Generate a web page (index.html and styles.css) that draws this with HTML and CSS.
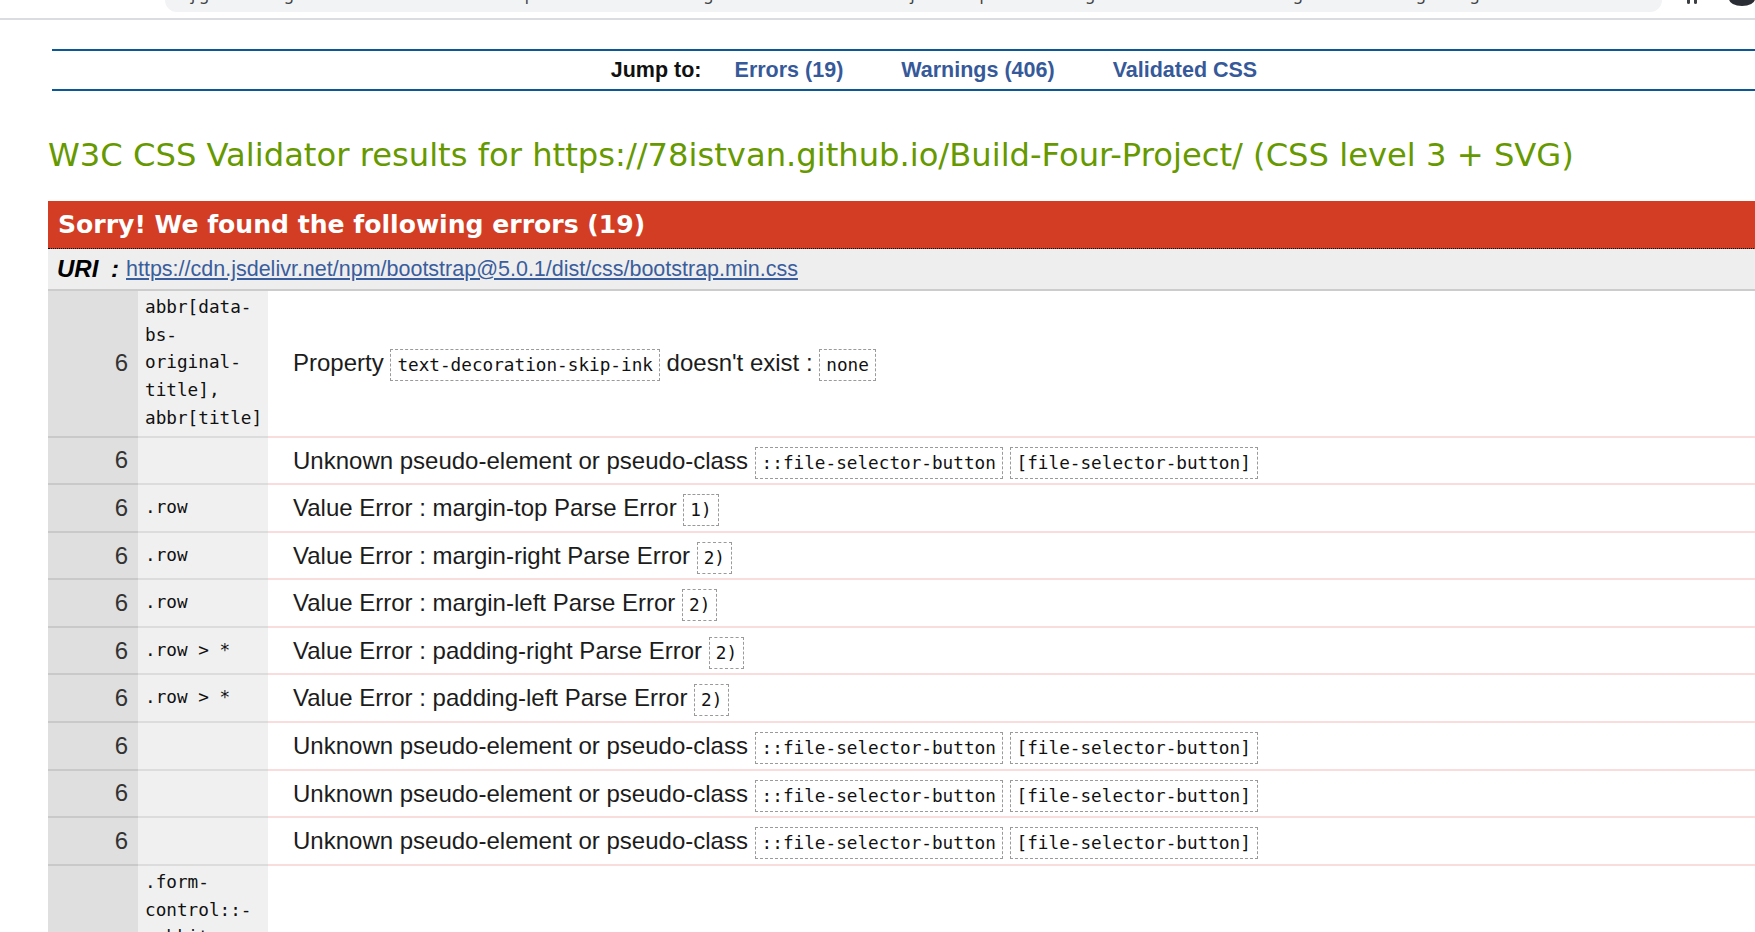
FILE: index.html
```html
<!DOCTYPE html>
<html lang="en">
<head>
<meta charset="utf-8">
<title>W3C CSS Validator results</title>
<link rel="stylesheet" href="styles.css">
</head>
<body>
<div class="chrome">
  <div class="omnibox">
    <div class="omnibox-text">jigsaw.w3.org/css-validator/validator?uri=https%3A%2F%2F78istvan.github.io%2FBuild-Four-Project%2F&amp;profile=css3svg&amp;usermedium=all&amp;warning=1&amp;vextwarning=&amp;lang=en</div>
  </div>
  <div class="chrome-icons">
    <span class="ext"></span><span class="ext"></span>
    <span class="avatar"></span>
  </div>
</div>

<div class="page">
  <nav class="jump">
    <span class="jump-label">Jump to:</span>
    <a href="#errors">Errors (19)</a>
    <a href="#warnings">Warnings (406)</a>
    <a href="#css">Validated CSS</a>
  </nav>

  <h2 class="title">W3C CSS Validator results for <span class="title-uri">https://78istvan.github.io/Build-Four-Project/</span> (CSS level 3 + SVG)</h2>

  <div class="errors" id="errors">
    <h3 class="errors-head">Sorry! We found the following errors (19)</h3>
    <div class="uri"><span class="uri-label">URI :</span><a class="uri-link" href="#">https://cdn.jsdelivr.net/npm/bootstrap@5.0.1/dist/css/bootstrap.min.css</a></div>
    <table class="err-table">
      <colgroup><col class="c-ln"><col class="c-sel"><col class="c-msg"></colgroup>
      <tbody>
        <tr>
          <td class="ln">6</td>
          <td class="sel">abbr[data-bs-original-title], abbr[title]</td>
          <td class="msg">Property <span class="code">text-decoration-skip-ink</span> doesn't exist : <span class="code">none</span></td>
        </tr>
        <tr>
          <td class="ln">6</td>
          <td class="sel"></td>
          <td class="msg">Unknown pseudo-element or pseudo-class <span class="code">::file-selector-button</span> <span class="code">[file-selector-button]</span></td>
        </tr>
        <tr>
          <td class="ln">6</td>
          <td class="sel">.row</td>
          <td class="msg">Value Error : margin-top Parse Error <span class="code">1)</span></td>
        </tr>
        <tr>
          <td class="ln">6</td>
          <td class="sel">.row</td>
          <td class="msg">Value Error : margin-right Parse Error <span class="code">2)</span></td>
        </tr>
        <tr>
          <td class="ln">6</td>
          <td class="sel">.row</td>
          <td class="msg">Value Error : margin-left Parse Error <span class="code">2)</span></td>
        </tr>
        <tr>
          <td class="ln">6</td>
          <td class="sel">.row &gt; *</td>
          <td class="msg">Value Error : padding-right Parse Error <span class="code">2)</span></td>
        </tr>
        <tr>
          <td class="ln">6</td>
          <td class="sel">.row &gt; *</td>
          <td class="msg">Value Error : padding-left Parse Error <span class="code">2)</span></td>
        </tr>
        <tr>
          <td class="ln">6</td>
          <td class="sel"></td>
          <td class="msg">Unknown pseudo-element or pseudo-class <span class="code">::file-selector-button</span> <span class="code">[file-selector-button]</span></td>
        </tr>
        <tr>
          <td class="ln">6</td>
          <td class="sel"></td>
          <td class="msg">Unknown pseudo-element or pseudo-class <span class="code">::file-selector-button</span> <span class="code">[file-selector-button]</span></td>
        </tr>
        <tr>
          <td class="ln">6</td>
          <td class="sel"></td>
          <td class="msg">Unknown pseudo-element or pseudo-class <span class="code">::file-selector-button</span> <span class="code">[file-selector-button]</span></td>
        </tr>
        <tr>
          <td class="ln">6</td>
          <td class="sel">.form-control::-webkit-file-upload-button</td>
          <td class="msg">Unknown pseudo-element or pseudo-class <span class="code">::-webkit-file-upload-button</span></td>
        </tr>
      </tbody>
    </table>
  </div>
</div>
</body>
</html>
```

FILE: styles.css
```css
html, body {
  margin: 0;
  padding: 0;
}

body {
  width: 1755px;
  height: 932px;
  overflow: hidden;
  background: #ffffff;
  font-family: "Liberation Sans", Arial, sans-serif;
  color: #000;
}

/* browser chrome remnant */
.chrome {
  display: flex;
  align-items: flex-start;
  height: 18px;
  border-bottom: 2px solid #dadce0;
  overflow: hidden;
}

.omnibox {
  margin-left: 165px;
  width: 1510px;
  height: 12px;
  background: #f1f3f4;
  border-radius: 0 0 18px 18px;
  overflow: hidden;
}

.omnibox-text {
  margin-top: -15px;
  padding-left: 26px;
  font-family: "Noto Sans", sans-serif;
  font-size: 16px;
  line-height: 18px;
  color: #3c4043;
  white-space: nowrap;
}

.chrome-icons {
  display: flex;
  align-items: flex-start;
  gap: 4px;
  margin-left: 25px;
}

.ext {
  width: 3px;
  height: 4px;
  background: #3c4043;
  border-radius: 0 0 2px 2px;
}

.avatar {
  margin-left: 28px;
  width: 26px;
  height: 14px;
  margin-top: -8px;
  border-radius: 50%;
  background: #2a2d33;
}

/* page */
.page {
  width: 1820px;
  padding-left: 48px;
}

.jump {
  margin-top: 29px;
  margin-left: 4px;
  width: 1764px;
  height: 38px;
  border-top: 2px solid #0b5896;
  border-bottom: 2px solid #0b5896;
  display: flex;
  justify-content: center;
  align-items: center;
  font-size: 21.5px;
  font-weight: bold;
}

.jump-label {
  color: #111;
  margin-right: 33px;
}

.jump a {
  color: #36599a;
  text-decoration: none;
}

.jump a + a {
  margin-left: 58px;
}

.title {
  margin: 44px 0 26px 0;
  font-family: "DejaVu Sans", Verdana, sans-serif;
  font-weight: normal;
  font-size: 32.2px;
  line-height: 40px;
  color: #669900;
  white-space: nowrap;
}

.errors-head {
  margin: 0;
  height: 47px;
  box-sizing: content-box;
  background: #d33d24;
  border-bottom: 1px dotted #000;
  color: #ffffff;
  font-family: "DejaVu Sans", Verdana, sans-serif;
  font-weight: bold;
  font-size: 25.1px;
  display: flex;
  align-items: center;
  padding-left: 10px;
}

.uri {
  height: 40px;
  background: #eeeeee;
  border-bottom: 2px solid #cccccc;
  display: flex;
  align-items: center;
  padding-left: 9px;
  font-size: 21.5px;
}

.uri-label {
  font-weight: bold;
  font-style: italic;
  font-size: 24px;
  word-spacing: 6px;
  margin-right: 7px;
}

.uri-link {
  color: #3a5d9c;
  text-decoration: underline;
}

.err-table {
  width: 1772px;
  table-layout: fixed;
  border-collapse: collapse;
}

.c-ln { width: 90px; }
.c-sel { width: 130px; }

.err-table td {
  vertical-align: middle;
  padding-top: 3px;
  padding-bottom: 3px;
}

.ln {
  background: #dfdfdf;
  text-align: right;
  padding-right: 10px;
  font-size: 24px;
  color: #333;
  border-bottom: 2px solid #c9c9c9;
}

.sel {
  background: #f0f0f0;
  padding-left: 7px;
  padding-right: 4px;
  font-family: "DejaVu Sans Mono", monospace;
  font-size: 17.7px;
  line-height: 27.7px;
  color: #111;
  border-bottom: 2px solid #dcdcdc;
}

.msg {
  padding-left: 25px;
  font-size: 24px;
  line-height: 39.6px;
  color: #1c1c1c;
  border-bottom: 2px solid #fadcdc;
  white-space: nowrap;
}

.code {
  display: inline-block;
  font-family: "DejaVu Sans Mono", monospace;
  font-size: 17.7px;
  line-height: 26px;
  padding: 2px 6px;
  border: 1px dashed #9a9a9a;
  color: #111;
}
```
